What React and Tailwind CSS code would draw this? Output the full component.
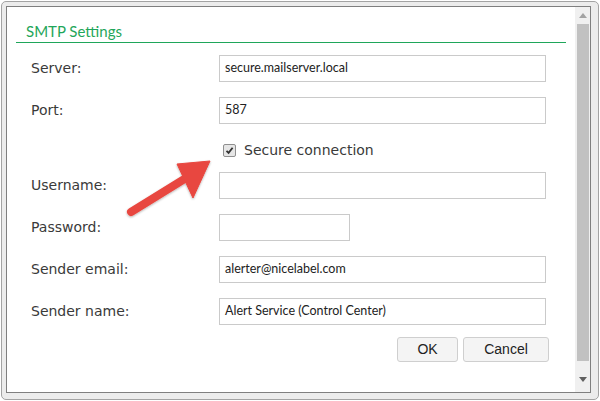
import React from 'react';

const labelFont = { fontFamily: '"DejaVu Sans", Verdana, sans-serif' };

const fields = [
  { label: 'Server:', value: 'secure.mailserver.local' },
  { label: 'Port:', value: '587' },
];

const fields2 = [
  { label: 'Username:', value: '' },
  { label: 'Password:', value: '', short: true },
  { label: 'Sender email:', value: 'alerter@nicelabel.com' },
  { label: 'Sender name:', value: 'Alert Service (Control Center)' },
];

function Row({ label, value, short, className = '' }) {
  return (
    <div className={`flex items-center h-[27px] ${className}`}>
      <div className="w-[188px] text-[14px] text-[#3a3a3a]" style={labelFont}>
        {label}
      </div>
      <div
        className={`h-[27px] border border-[#cacaca] bg-white flex items-center px-[5px] text-[12.5px] text-[#222] font-['Lato',sans-serif] ${
          short ? 'w-[131px]' : 'w-[327px]'
        }`}
      >
        {value}
      </div>
    </div>
  );
}

function Arrow() {
  return (
    <svg className="absolute left-0 top-0 pointer-events-none" width="600" height="401">
      <defs>
        <filter id="sh" x="-20%" y="-20%" width="140%" height="140%">
          <feDropShadow dx="0" dy="1" stdDeviation="1" floodColor="#000" floodOpacity="0.3" />
        </filter>
      </defs>
      <g filter="url(#sh)" fill="#e8473f" stroke="#e8473f">
        <line x1="131" y1="212" x2="186" y2="178" strokeWidth="8" strokeLinecap="round" />
        <polygon points="210,161 177,164 193,198" strokeWidth="1" strokeLinejoin="round" />
      </g>
    </svg>
  );
}

export default function App() {
  return (
    <div className="w-[600px] h-[401px] bg-white relative">
      <div className="absolute inset-0 m-[1px] rounded-[5px] border border-[#a3a3a3] bg-[#ececec] pl-[4px] pt-[4px] pr-[7px] pb-[6px] flex">
        <div className="flex-1 border border-[#7f7f7f] bg-white flex">
          <div className="flex-1 pt-[14px] pl-[9px] pr-[9px]">
            <div className="border-b border-[#1fa65a] pl-[10px] pb-[1px] text-[15px] leading-[20px] text-[#1fa65a] font-['Lato',sans-serif]">
              SMTP Settings
            </div>
            <div className="pl-[15px] pt-[12px]">
              <Row {...fields[0]} />
              <Row {...fields[1]} className="mt-[15px]" />
              <div className="flex items-center h-[18px] mt-[17px] pl-[192px]">
                <span className="w-[13px] h-[13px] rounded-[2px] border border-[#8f8f8f] bg-[#e6e6e6] flex items-center justify-center">
                  <svg width="9" height="9" viewBox="0 0 9 9">
                    <path d="M1.5 4.8 L3.6 6.9 L7.6 1.8" fill="none" stroke="#333" strokeWidth="1.8" />
                  </svg>
                </span>
                <span className="ml-[8px] text-[14px] text-[#3a3a3a]" style={labelFont}>
                  Secure connection
                </span>
              </div>
              <Row {...fields2[0]} className="mt-[13px]" />
              {fields2.slice(1).map((f) => (
                <Row key={f.label} {...f} className="mt-[15px]" />
              ))}
              <div className="flex justify-end gap-[5px] mt-[12px] w-[518px] font-['Liberation_Sans',Arial,sans-serif] text-[14px] text-[#222]">
                <button className="w-[61px] h-[25px] rounded-[3px] border border-[#cfcfcf] bg-[#f4f4f4]">OK</button>
                <button className="w-[86px] h-[25px] rounded-[3px] border border-[#cfcfcf] bg-[#f4f4f4]">Cancel</button>
              </div>
            </div>
          </div>
          <div className="w-[15px] bg-[#f0f0f0] flex flex-col items-center">
            <div className="h-[17px] flex items-center justify-center">
              <svg width="8" height="5" viewBox="0 0 8 5">
                <polygon points="0,5 8,5 4,0" fill="#a3a3a3" />
              </svg>
            </div>
            <div className="w-[12px] h-[337px] bg-[#c1c1c1]" />
            <div className="flex-1 flex items-end pb-[10px]">
              <svg width="8" height="5" viewBox="0 0 8 5">
                <polygon points="0,0 8,0 4,5" fill="#606060" />
              </svg>
            </div>
          </div>
        </div>
      </div>
      <Arrow />
    </div>
  );
}
